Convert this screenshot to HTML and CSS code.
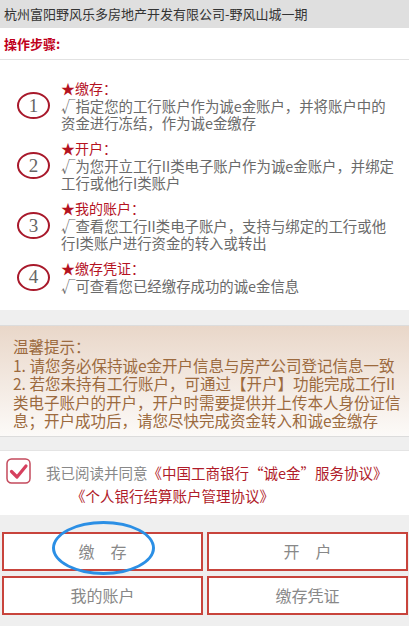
FILE: index.html
```html
<!DOCTYPE html>
<html lang="zh-CN">
<head>
<meta charset="utf-8">
<title>诚e金</title>
<link rel="stylesheet" href="styles.css">
</head>
<body>
<header class="topbar">杭州富阳野风乐多房地产开发有限公司-野风山城一期</header>
<div class="section-title">操作步骤:</div>
<ul class="steps">
  <li class="step">
    <span class="num">1</span>
    <div class="step-body">
      <div class="step-title">★缴存：</div>
      <div class="step-desc">√指定您的工行账户作为诚e金账户，并将账户中的资金进行冻结，作为诚e金缴存</div>
    </div>
  </li>
  <li class="step">
    <span class="num">2</span>
    <div class="step-body">
      <div class="step-title">★开户：</div>
      <div class="step-desc">√为您开立工行II类电子账户作为诚e金账户，并绑定工行或他行I类账户</div>
    </div>
  </li>
  <li class="step">
    <span class="num">3</span>
    <div class="step-body">
      <div class="step-title">★我的账户：</div>
      <div class="step-desc">√查看您工行II类电子账户，支持与绑定的工行或他行I类账户进行资金的转入或转出</div>
    </div>
  </li>
  <li class="step">
    <span class="num">4</span>
    <div class="step-body">
      <div class="step-title">★缴存凭证：</div>
      <div class="step-desc">√可查看您已经缴存成功的诚e金信息</div>
    </div>
  </li>
</ul>
<div class="band"></div>
<div class="tips">
  <div>温馨提示：</div>
  <div>1. 请您务必保持诚e金开户信息与房产公司登记信息一致</div>
  <div>2. 若您未持有工行账户，可通过【开户】功能完成工行II类电子账户的开户，开户时需要提供并上传本人身份证信息；开户成功后，请您尽快完成资金转入和诚e金缴存</div>
</div>
<div class="band band-low"></div>
<div class="agree">
  <span class="checkbox">
    <svg width="25" height="26" viewBox="0 0 25 26"><rect x="1" y="1" width="23" height="24" rx="4.5" fill="#fff" stroke="#c44a5c" stroke-width="1.5"/><path d="M5.5 13.5 L11 19 L20 8" fill="none" stroke="#d6405e" stroke-width="3.2" stroke-linecap="round" stroke-linejoin="round"/></svg>
  </span>
  <div class="agree-text">
    <div class="agree-line">我已阅读并同意<a class="link">《中国工商银行“诚e金”服务协议》</a></div>
    <div class="agree-line indent"><a class="link">《个人银行结算账户管理协议》</a></div>
  </div>
</div>
<div class="actions">
  <button class="btn">缴　存</button>
  <button class="btn">开　户</button>
  <button class="btn">我的账户</button>
  <button class="btn">缴存凭证</button>
  <span class="mark"></span>
</div>
</body>
</html>
```
FILE: styles.css
```css
html, body {
  margin: 0;
  padding: 0;
}
body {
  background: #efefef;
  font-family: "Noto Sans CJK SC", "Microsoft YaHei", sans-serif;
  width: 409px;
  min-height: 626px;
}
.topbar {
  background: #dfdfdf;
  height: 28px;
  line-height: 28px;
  padding-left: 4px;
  font-size: 13px;
  color: #333;
  white-space: nowrap;
}
.section-title {
  background: #fff;
  height: 31px;
  line-height: 31px;
  padding-left: 4px;
  font-size: 13px;
  font-weight: bold;
  color: #c0001b;
  border-bottom: 1px solid #e2e2e2;
}
.steps {
  list-style: none;
  margin: 0;
  padding: 20px 15px 16px 17px;
  background: #fff;
}
.step {
  display: flex;
  align-items: center;
}
.step + .step {
  margin-top: 9px;
}
.num {
  flex: none;
  width: 29px;
  height: 23px;
  border: 2px solid #a8192b;
  border-radius: 50%;
  display: flex;
  align-items: center;
  justify-content: center;
  font-family: "Liberation Serif", serif;
  font-size: 19px;
  color: #666;
  margin-right: 11px;
}
.step-body {
  flex: 1;
  line-height: 17px;
}
.step-title {
  font-size: 14px;
  color: #b5121f;
}
.step-desc {
  font-size: 14.4px;
  color: #6a6a6a;
}
.band {
  height: 15px;
  background: #efefef;
  border-bottom: 1px solid #dcdcdc;
}
.band-low {
  height: 13px;
  border-bottom: 1px solid #e4e4e4;
}
.tips {
  background: linear-gradient(#e9d7c9, #fcfaf8);
  padding: 11px 8px 6px 13px;
  font-size: 15.5px;
  line-height: 18.5px;
  color: #9c6a3e;
  border-bottom: 1px solid #dcdcdc;
}
.agree {
  background: #fff;
  display: flex;
  align-items: flex-start;
  padding: 7px 0 8px 6px;
}
.checkbox {
  flex: none;
  width: 25px;
  height: 26px;
  display: block;
}
.checkbox svg {
  display: block;
}
.agree-text {
  margin-left: 15px;
  padding-top: 3px;
  font-size: 14.5px;
  line-height: 23px;
  color: #888;
}
.indent {
  padding-left: 25px;
}
.link {
  color: #b01c2a;
  text-decoration: none;
}
.actions {
  position: relative;
  display: grid;
  grid-template-columns: 1fr 1fr;
  gap: 5px 4px;
  padding: 17px 1px 12px 2px;
}
.btn {
  height: 39px;
  box-sizing: border-box;
  border: 2px solid #c8443c;
  border-radius: 0;
  background: #fff;
  color: #888;
  font-family: inherit;
  font-size: 16px;
  padding: 0;
  margin: 0;
}
.mark {
  position: absolute;
  left: 52px;
  top: 6px;
  width: 103px;
  height: 54px;
  box-sizing: border-box;
  border: 3px solid #2b8fe5;
  border-radius: 50%;
  pointer-events: none;
}
```
